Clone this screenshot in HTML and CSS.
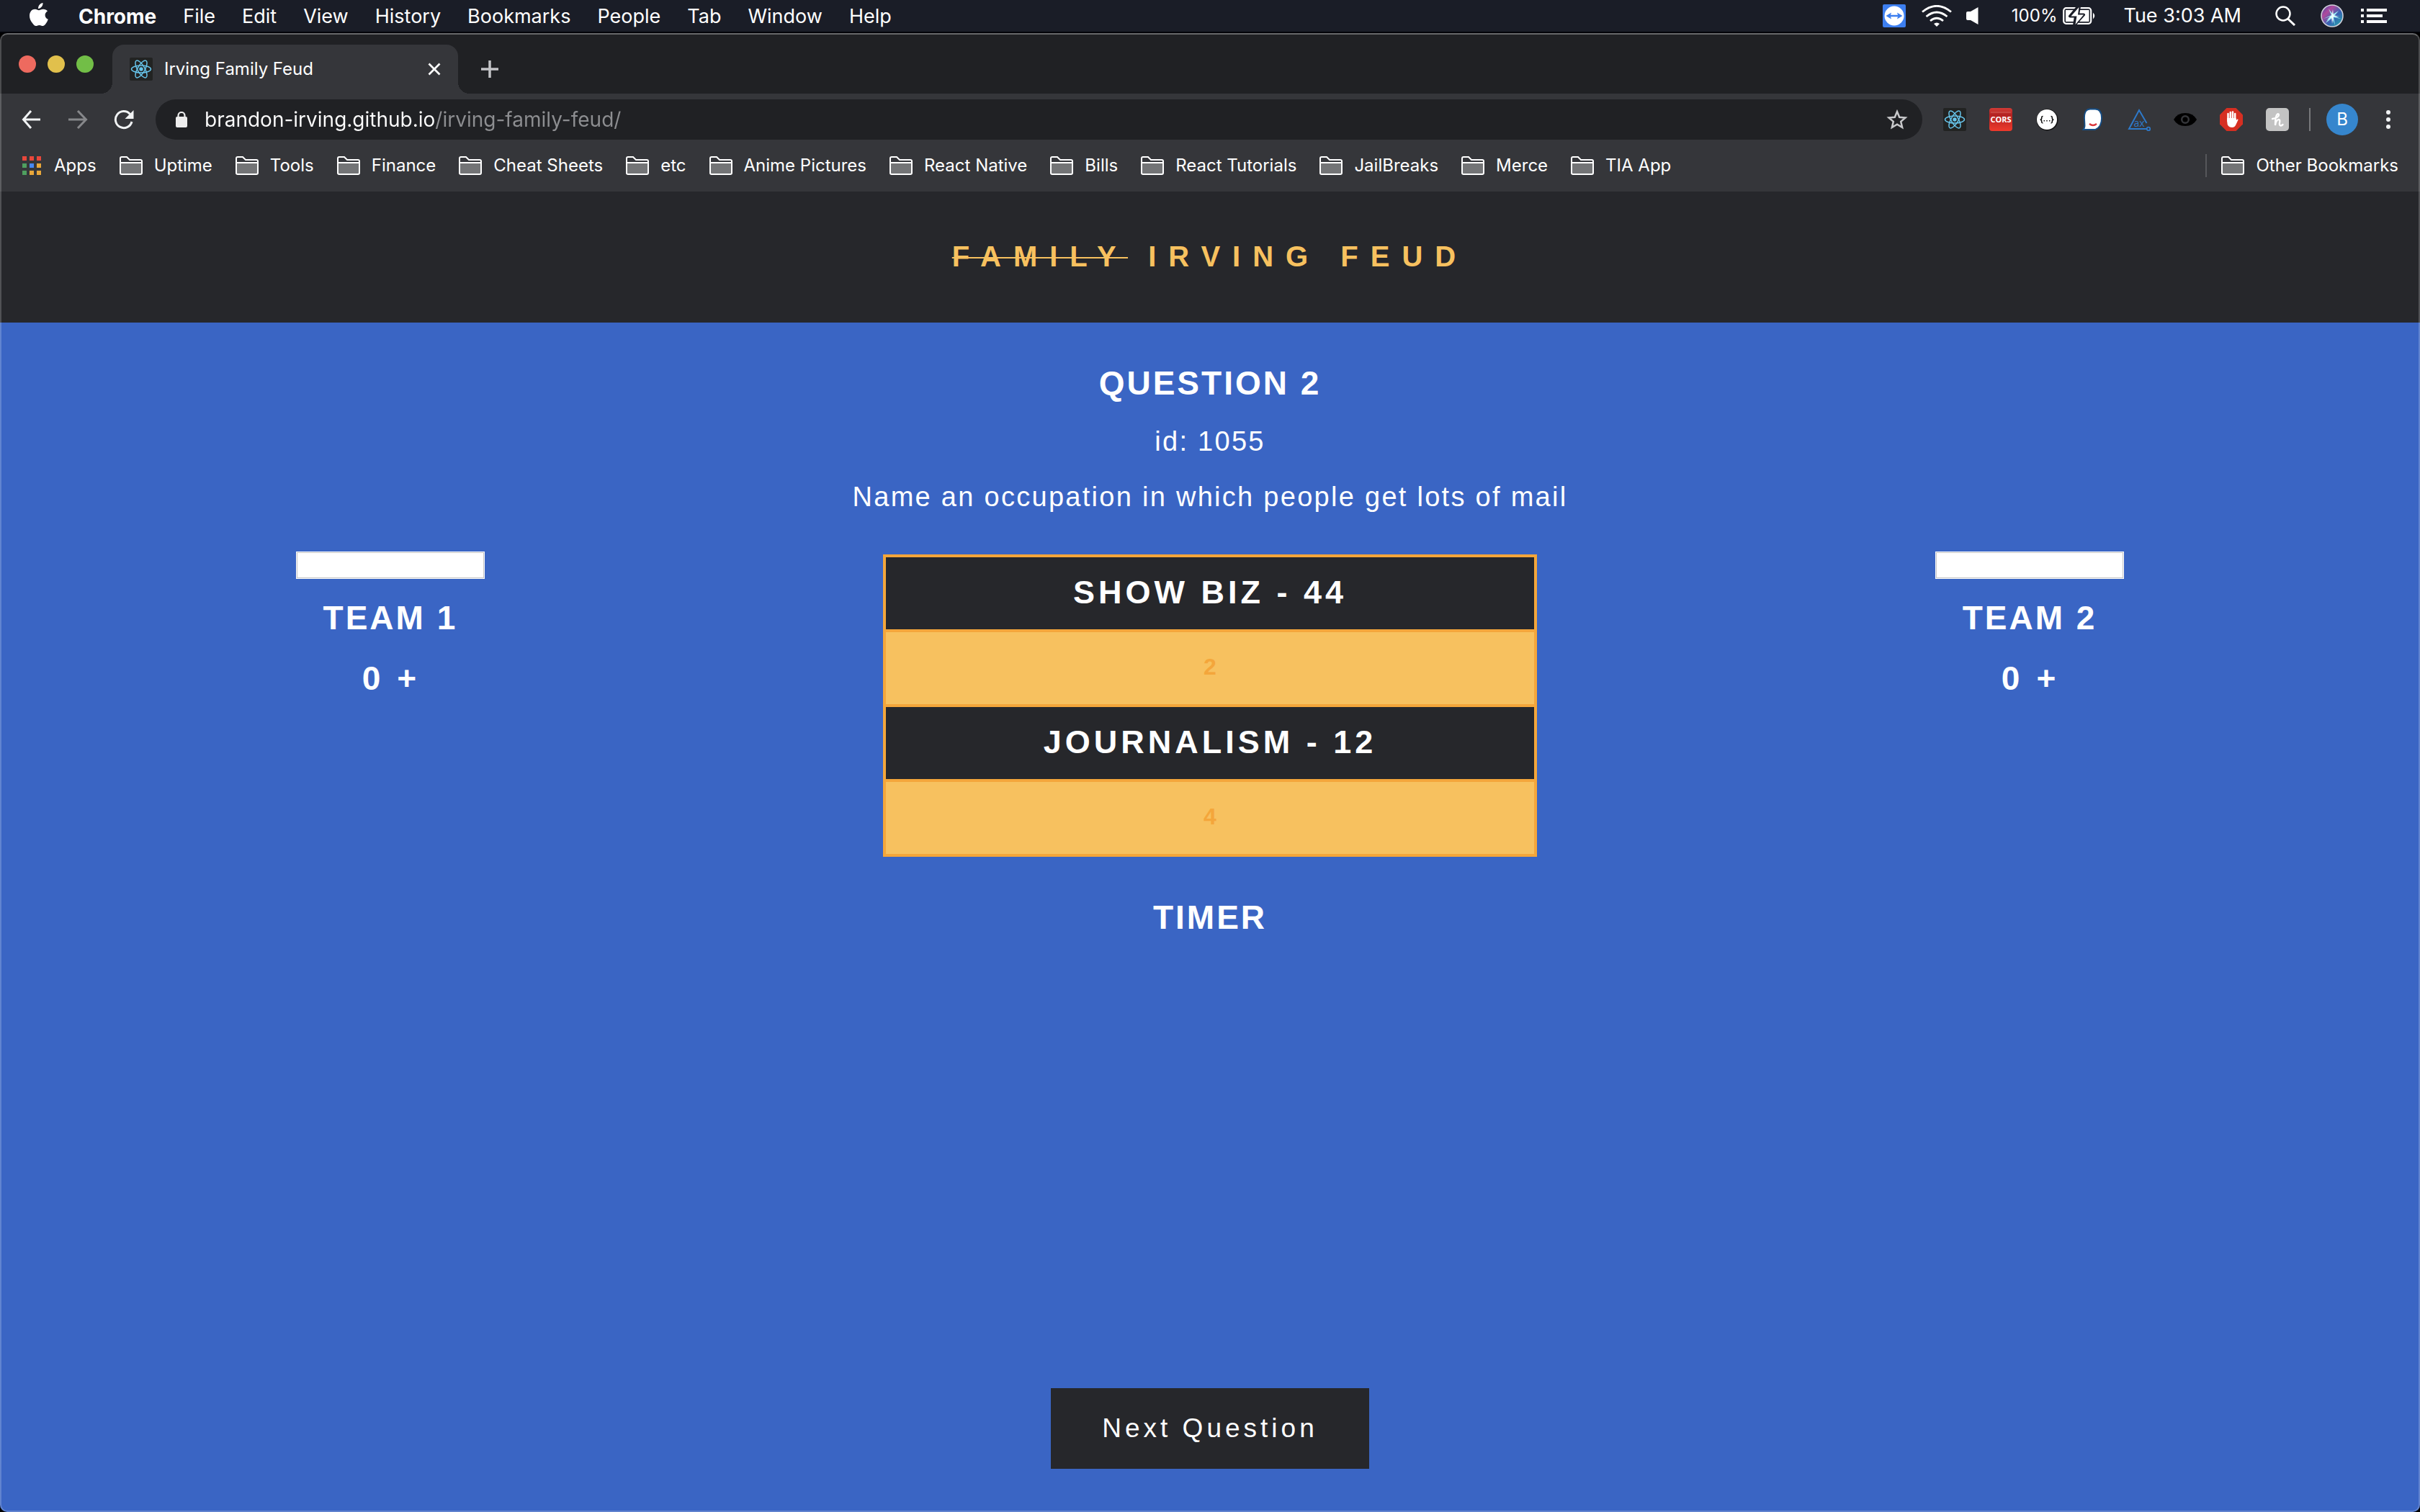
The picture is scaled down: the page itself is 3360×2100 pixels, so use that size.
FILE: index.html
```html
<!DOCTYPE html>
<html lang="en">
<head>
<meta charset="utf-8">
<title>Irving Family Feud</title>
<link rel="stylesheet" href="styles.css">
</head>
<body>
<svg class="defs" width="0" height="0" aria-hidden="true">
  <symbol id="folder" viewBox="0 0 32 26">
    <path d="M2 9h28v15H2z" fill="#737476"/>
    <path d="M1 24V3q0-2 2-2h7l4 4h15q2 0 2 2v16q0 2-2 2H3q-2 0-2-2zM1 9h30" fill="none" stroke="#fff" stroke-width="2"/>
  </symbol>
  <symbol id="react" viewBox="0 0 32 32">
    <rect width="32" height="32" rx="2" fill="#222322"/>
    <g fill="none" stroke="#67c4ea" stroke-width="1.500">
      <ellipse cx="16" cy="16" rx="13.500" ry="5"/>
      <ellipse cx="16" cy="16" rx="13.500" ry="5" transform="rotate(60 16 16)"/>
      <ellipse cx="16" cy="16" rx="13.500" ry="5" transform="rotate(120 16 16)"/>
    </g>
    <circle cx="16" cy="16" r="2.700" fill="#67c4ea"/>
  </symbol>
</svg>

<div class="menubar">
  <nav class="menus" aria-label="Menu bar">
    <svg class="apple" width="28" height="34" viewBox="0 0 28 34"><path fill="#fff" d="M19.500 1c.3 2.200-.6 4.200-1.800 5.600-1.300 1.500-3 2.400-4.600 2.300-.3-2.200.7-4.200 1.900-5.500C16.200 2 18 1.200 19.500 1zM26 12.400c-2.200 1.300-3.400 3.200-3.400 5.500 0 2.700 1.600 4.900 4.200 5.900-.7 2.200-1.800 4.200-3.100 6-1.200 1.700-2.500 3.200-4.400 3.200-1.900 0-2.500-1.100-4.700-1.100s-2.900 1.100-4.700 1.100c-1.900 0-3.300-1.700-4.600-3.600C2.600 26.500 1 22.800 1 19c0-6 3.800-9.200 7.500-9.200 2.200 0 4.100 1.400 5.500 1.400 1.300 0 3.400-1.500 6-1.500 2.500 0 4.700 1 6 2.700z"/></svg>
    <a class="menu menu-app" href="#">Chrome</a>
    <a class="menu" href="#">File</a>
    <a class="menu" href="#">Edit</a>
    <a class="menu" href="#">View</a>
    <a class="menu" href="#">History</a>
    <a class="menu" href="#">Bookmarks</a>
    <a class="menu" href="#">People</a>
    <a class="menu" href="#">Tab</a>
    <a class="menu" href="#">Window</a>
    <a class="menu" href="#">Help</a>
  </nav>
  <div class="status">
    <svg class="st-viewer" width="32" height="32" viewBox="0 0 32 32"><rect width="32" height="32" rx="2" fill="#3d7ff0"/><circle cx="16" cy="16" r="13.500" fill="#fff"/><path d="M4.500 16l7.500-4.500-1 3.200h10l-1-3.200 7.500 4.500-7.500 4.500 1-3.200H11l1 3.200z" fill="#3d7ff0"/></svg>
    <svg class="st-wifi" width="42" height="30" viewBox="0 0 42 30"><g fill="none" stroke="#fff" stroke-width="2.700"><path d="M1 9.500Q21-7 41 9.500"/><path d="M6.500 16Q21 4 35.500 16"/><path d="M12 22Q21 14.500 30 22"/></g><path d="M17 26q4-3 8 0l-4 4z" fill="#fff"/></svg>
    <svg class="st-sound" width="17" height="24" viewBox="0 0 17 24"><path d="M2 6h4l10.500-6v24L6 18H2q-2 0-2-2V8q0-2 2-2z" fill="#fff"/></svg>
    <span class="percent">100%</span>
    <svg class="st-battery" width="46" height="26" viewBox="0 0 46 26"><rect x="1.200" y="2.200" width="38" height="21.600" rx="3.500" fill="none" stroke="#fff" stroke-width="2.200"/><rect x="4" y="5" width="32.500" height="16" fill="#fff"/><path d="M21.500 0L10 13.500h8L16 26l13-14.500h-8L23 0z" fill="#fff" stroke="#1a1d27" stroke-width="4" stroke-linejoin="round"/><path d="M22.500 1L11.500 13.500h8L17.500 25 29 11.500h-8z" fill="#fff"/><path d="M42 8.500q4.500 4.500 0 9z" fill="#fff"/></svg>
    <span class="clock">Tue 3:03 AM</span>
    <svg class="st-search" width="30" height="28" viewBox="0 0 30 28"><circle cx="12" cy="11" r="9.500" fill="none" stroke="#fff" stroke-width="2.500"/><path d="M18.500 18L28 27" stroke="#fff" stroke-width="3"/></svg>
    <svg class="st-siri" width="32" height="32" viewBox="0 0 32 32"><defs><linearGradient id="siri" x1="0" y1="0" x2="1" y2="1"><stop offset="0" stop-color="#3a48a8"/><stop offset=".3" stop-color="#b04a9c"/><stop offset=".6" stop-color="#3563b4"/><stop offset="1" stop-color="#24b5a5"/></linearGradient></defs><circle cx="16" cy="16" r="15" fill="url(#siri)" stroke="#d2d2dc" stroke-width="1.500"/><path d="M4 20l11-5L11 6l6 8 8-5-6 7 9 4-10-2 2 11-4-10-9 7 6-9z" fill="#9ff1f5"/><path d="M8 22l7-6 2-9 1 8 8 2-8 0-2 10-1-9z" fill="#fff" opacity=".8"/></svg>
    <svg class="st-list" width="36" height="20" viewBox="0 0 36 20"><path d="M0 0h4v4H0zM8 0h28v4H8zM0 8h4v4H0zM8 8h22v4H8zM0 16h4v4H0zM8 16h28v4H8z" fill="#fff"/></svg>
  </div>
</div>

<div class="window">
  <div class="tabstrip">
    <div class="lights"><span class="light red"></span><span class="light yellow"></span><span class="light green"></span></div>
    <div class="tab">
      <svg width="32" height="32"><use href="#react"/></svg>
      <span class="tab-title">Irving Family Feud</span>
      <button class="icon-btn" aria-label="Close tab"><svg width="18" height="18" viewBox="0 0 18 18"><path d="M1.500 1.500l15 15M16.500 1.500l-15 15" stroke="#fff" stroke-width="2.700"/></svg></button>
    </div>
    <button class="icon-btn new-tab" aria-label="New tab"><svg width="24" height="24" viewBox="0 0 24 24"><path d="M12 0v24M0 12h24" stroke="#c3c4c7" stroke-width="3.500"/></svg></button>
  </div>

  <div class="toolbar">
    <div class="nav-buttons">
      <button class="icon-btn" aria-label="Back"><svg width="28" height="26" viewBox="0 0 28 26"><path d="M13 1L2.500 13 13 25M2.500 13H26" fill="none" stroke="#f1f3f4" stroke-width="3"/></svg></button>
      <button class="icon-btn" aria-label="Forward"><svg width="28" height="26" viewBox="0 0 28 26"><path d="M14 1l11.500 12L14 25M25.500 13H1" fill="none" stroke="#86878a" stroke-width="3"/></svg></button>
      <button class="icon-btn" aria-label="Reload"><svg width="28" height="28" viewBox="0 0 28 28"><path d="M25 17A11.500 11.500 0 1 1 22.500 6.500" fill="none" stroke="#f1f3f4" stroke-width="3"/><path d="M27.500 1v12h-12z" fill="#f1f3f4"/></svg></button>
    </div>
    <div class="omnibox">
      <svg width="16" height="22" viewBox="0 0 16 22"><rect y="7" width="16" height="15" rx="2" fill="#eee"/><path d="M3.500 8V5.500a4.500 4.500 0 0 1 9 0V8" fill="none" stroke="#eee" stroke-width="2.200"/></svg>
      <input class="url" type="text" aria-label="Address" value="brandon-irving.github.io/irving-family-feud/">
      <button class="icon-btn" aria-label="Bookmark this page"><svg width="30" height="30" viewBox="0 0 30 30"><path d="M15 4l3.200 7.700 8.300.7-6.300 5.500 1.900 8.100L15 21.700 7.900 26l1.900-8.100-6.300-5.500 8.300-.7z" fill="none" stroke="#c8c9cb" stroke-width="2.500"/></svg></button>
    </div>
    <div class="extensions">
      <svg width="32" height="32"><use href="#react"/></svg>
      <svg width="32" height="32" viewBox="0 0 32 32"><defs><linearGradient id="cors" x1="0" y1="0" x2="0" y2="1"><stop offset="0" stop-color="#d23c36"/><stop offset=".3" stop-color="#b32222"/><stop offset="1" stop-color="#ee3a2c"/></linearGradient></defs><rect width="32" height="32" rx="4" fill="url(#cors)"/><path d="M2 6h28" stroke="#d0605a"/><text x="16" y="20" text-anchor="middle" class="cors">CORS</text></svg>
      <svg width="32" height="32" viewBox="0 0 32 32"><circle cx="16.500" cy="16.500" r="15" fill="#111"/><circle cx="16" cy="16" r="14" fill="#fff"/><path d="M10.500 11.500q-2 0-1.800 2.200t-2 2.500q2.200.3 2 2.500t1.800 2.200M21.500 11.500q2 0 1.800 2.200t2 2.500q-2.200.3-2 2.500t-1.800 2.200" fill="none" stroke="#111" stroke-width="1.500"/><path d="M11.500 17h1.500v1.500h-1.500zM15.200 17h1.500v1.500h-1.500zM19 17h1.500v1.500H19z" fill="#111"/></svg>
      <svg width="32" height="32" viewBox="0 0 32 32"><path d="M4 14Q4 1.500 12 1.500h7Q28 1.500 28 14t-9 16H2.500Q5 27 4.500 23z" fill="#fff" stroke="#164f87" stroke-width="1.800"/><path d="M11 22q5 4 10 0" fill="none" stroke="#d9363b" stroke-width="2.300"/></svg>
      <svg width="32" height="32" viewBox="0 0 32 32"><path d="M26 29H2L16 3l10.500 18" fill="none" stroke="#2e79c9" stroke-width="2"/><circle cx="29" cy="29" r="2.300" fill="none" stroke="#2e79c9" stroke-width="1.700"/><text x="16" y="26" text-anchor="middle" class="ax">ax</text></svg>
      <svg width="32" height="32" viewBox="0 0 32 32"><path d="M0 16Q5 7 16 7t16 9q-5 9-16 9T0 16z" fill="#000"/><circle cx="16" cy="16" r="4.800" fill="none" stroke="#35363a" stroke-width="2.500"/></svg>
      <svg width="32" height="32" viewBox="0 0 32 32"><path d="M9.500 0h13L32 9.500v13L22.500 32h-13L0 22.500v-13z" fill="#d62f22"/><g stroke="#fff" stroke-width="2.500" stroke-linecap="round"><path d="M11.500 8v10M14.800 6V18M18 5.500V18M21.200 8V20"/></g><path d="M10.200 14h12.200l1 3 .8-1.500q1.500-.5 1.300 1L22 24q-1.500 3-5 3-6.700 0-6.800-8z" fill="#fff"/></svg>
      <svg width="32" height="32" viewBox="0 0 32 32"><rect width="32" height="32" rx="5" fill="#c3c3c3"/><path d="M9 15q8-1 9-5 0-2.500-2-1.500-3 2-3 15.500 1-7 4.500-8 2.500 0 1.700 3.500-1 5 1.300 5 2 0 3-1.500" fill="none" stroke="#fff" stroke-width="2.300" stroke-linecap="round"/></svg>
    </div>
    <span class="divider"></span>
    <button class="avatar" aria-label="Profile">B</button>
    <button class="icon-btn" aria-label="More"><svg width="6" height="26" viewBox="0 0 6 26"><circle cx="3" cy="3" r="3" fill="#f1f3f4"/><circle cx="3" cy="13" r="3" fill="#f1f3f4"/><circle cx="3" cy="23" r="3" fill="#f1f3f4"/></svg></button>
  </div>

  <nav class="bookmarks" aria-label="Bookmarks">
    <a class="bookmark apps" href="#"><svg width="26" height="27" viewBox="0 0 26 27"><path d="M0 0h6v6H0zM10 0h6v6h-6zM20 0h6v6h-6z" fill="#e8473b"/><path d="M0 10h6v6H0zM0 20h6v6H0z" fill="#4f9f5f"/><path d="M10 10h6v6h-6z" fill="#4587f4"/><path d="M20 10h6v6h-6zM10 20h6v6h-6zM20 20h6v6h-6z" fill="#e8a73a"/></svg>Apps</a>
    <a class="bookmark" href="#"><svg width="32" height="26"><use href="#folder"/></svg>Uptime</a>
    <a class="bookmark" href="#"><svg width="32" height="26"><use href="#folder"/></svg>Tools</a>
    <a class="bookmark" href="#"><svg width="32" height="26"><use href="#folder"/></svg>Finance</a>
    <a class="bookmark" href="#"><svg width="32" height="26"><use href="#folder"/></svg>Cheat Sheets</a>
    <a class="bookmark" href="#"><svg width="32" height="26"><use href="#folder"/></svg>etc</a>
    <a class="bookmark" href="#"><svg width="32" height="26"><use href="#folder"/></svg>Anime Pictures</a>
    <a class="bookmark" href="#"><svg width="32" height="26"><use href="#folder"/></svg>React Native</a>
    <a class="bookmark" href="#"><svg width="32" height="26"><use href="#folder"/></svg>Bills</a>
    <a class="bookmark" href="#"><svg width="32" height="26"><use href="#folder"/></svg>React Tutorials</a>
    <a class="bookmark" href="#"><svg width="32" height="26"><use href="#folder"/></svg>JailBreaks</a>
    <a class="bookmark" href="#"><svg width="32" height="26"><use href="#folder"/></svg>Merce</a>
    <a class="bookmark" href="#"><svg width="32" height="26"><use href="#folder"/></svg>TIA App</a>
    <a class="bookmark other" href="#"><svg width="32" height="26"><use href="#folder"/></svg>Other Bookmarks</a>
  </nav>

  <header class="banner"><h1 class="title"><s>FAMILY</s> IRVING FEUD</h1></header>

  <main class="game">
    <section class="question">
      <h2 class="heading">QUESTION 2</h2>
      <p class="detail">id: 1055</p>
      <p class="detail">Name an occupation in which people get lots of mail</p>
    </section>

    <section class="round">
      <div class="team">
        <input class="team-name" type="text" aria-labelledby="team1">
        <h2 class="heading" id="team1">TEAM 1</h2>
        <div class="score heading"><span>0</span><button class="plus" aria-label="Add points to team 1">+</button></div>
      </div>
      <div class="center">
        <div class="board">
          <button class="answer shown">SHOW BIZ - 44</button>
          <button class="answer">2</button>
          <button class="answer shown">JOURNALISM - 12</button>
          <button class="answer">4</button>
        </div>
        <h2 class="heading">TIMER</h2>
      </div>
      <div class="team">
        <input class="team-name" type="text" aria-labelledby="team2">
        <h2 class="heading" id="team2">TEAM 2</h2>
        <div class="score heading"><span>0</span><button class="plus" aria-label="Add points to team 2">+</button></div>
      </div>
    </section>

    <button class="next">Next Question</button>
  </main>
</div>
</body>
</html>
```

FILE: styles.css
```css
* {
  box-sizing: border-box;
}

body {
  margin: 0;
  min-height: 100vh;
  display: flex;
  flex-direction: column;
  background: #000;
  color: #fff;
  font-family: Inter, "Liberation Sans", sans-serif;
}

h1, h2, p {
  margin: 0;
}

a {
  color: inherit;
  text-decoration: none;
}

button {
  padding: 0;
  border: 0;
  background: none;
  color: inherit;
  font: inherit;
}

svg {
  display: block;
  flex: none;
}

.defs {
  position: absolute;
}

/* System menu bar */
.menubar {
  display: flex;
  justify-content: space-between;
  align-items: center;
  height: 46px;
  padding: 0 46px 0 40px;
  border-bottom: 2px solid #020308;
  background: #1a1d27;
  font-size: 27px;
  line-height: 44px;
  white-space: nowrap;
}

.menus {
  display: flex;
  align-items: center;
  gap: 37px;
  padding-top: 2px;
}

.apple {
  margin: 0 4px 6px 0;
}

.menu-app {
  font-size: 28px;
  font-weight: 700;
}

.status {
  display: flex;
  align-items: center;
}

.st-viewer { margin-right: 22px; }
.st-wifi { margin-right: 20px; }
.st-sound { margin-right: 46px; }
.percent { margin-right: 8px; font-size: 24px; }
.st-battery { margin-right: 38px; }
.clock { margin-right: 46px; }
.st-search { margin-right: 34px; }
.st-siri { margin-right: 24px; }

/* Browser window */
.window {
  position: relative;
  flex: 1;
  display: flex;
  flex-direction: column;
  overflow: hidden;
  border-radius: 10px;
  background: #35363a;
}

.window::after {
  content: "";
  position: absolute;
  inset: 0;
  border: 2px solid rgba(255, 255, 255, .2);
  border-top-color: rgba(255, 255, 255, .32);
  border-radius: 10px;
  pointer-events: none;
}

.tabstrip {
  display: flex;
  align-items: center;
  height: 84px;
  padding: 16px 26px 0;
  background: #202124;
}

.lights {
  display: flex;
  gap: 16px;
  width: 130px;
  margin-bottom: 14px;
}

.light {
  width: 24px;
  height: 24px;
  border-radius: 50%;
}

.red { background: #ee6a5f; }
.yellow { background: #e1c04c; }
.green { background: #72be47; }

.tab {
  position: relative;
  display: flex;
  align-items: center;
  width: 480px;
  height: 68px;
  padding: 0 24px;
  border-radius: 16px 16px 0 0;
  background: #35363a;
}

.tab::before,
.tab::after {
  content: "";
  position: absolute;
  bottom: 0;
  width: 16px;
  height: 16px;
}

.tab::before {
  right: 100%;
  background: radial-gradient(circle at 0 0, #202124 16px, #35363a 16px);
}

.tab::after {
  left: 100%;
  background: radial-gradient(circle at 100% 0, #202124 16px, #35363a 16px);
}

.tab-title {
  flex: 1;
  margin-left: 16px;
  font-size: 24px;
  line-height: 32px;
}

.new-tab {
  margin-left: 32px;
}

.toolbar {
  display: flex;
  align-items: center;
  height: 72px;
  padding: 0 41px 0 30px;
}

.nav-buttons {
  display: flex;
  gap: 36px;
}

.omnibox {
  flex: 1;
  display: flex;
  align-items: center;
  height: 56px;
  margin: 0 29px 0 30px;
  padding: 0 20px 0 28px;
  border-radius: 28px;
  background: #202124;
}

.url {
  flex: 1;
  min-width: 0;
  margin-left: 24px;
  padding: 0;
  border: 0;
  outline: 0;
  background: linear-gradient(90deg, #fff 320px, #8d8e91 320px);
  background-clip: text;
  color: #fff;
  -webkit-text-fill-color: transparent;
  font: 28px/40px Inter, "Liberation Sans", sans-serif;
}

.extensions {
  display: flex;
  gap: 32px;
}

.cors {
  fill: #fff;
  font: 700 11px "Open Sans", sans-serif;
}

.ax {
  fill: #2e79c9;
  font: 14px "Open Sans", sans-serif;
}

.divider {
  width: 2px;
  height: 32px;
  margin: 0 22px 0 28px;
  background: #77787b;
}

.avatar {
  width: 44px;
  height: 44px;
  margin-right: 39px;
  border-radius: 50%;
  background: #3686cd;
  font-size: 24px;
  line-height: 44px;
  text-align: center;
}

.bookmarks {
  display: flex;
  align-items: center;
  gap: 32px;
  height: 64px;
  padding: 0 30px 8px 31px;
  font-size: 24px;
  line-height: 32px;
  white-space: nowrap;
}

.bookmark {
  display: flex;
  align-items: center;
  gap: 16px;
}

.apps {
  gap: 18px;
}

.other {
  margin-left: auto;
  padding-left: 20px;
  border-left: 2px solid #56575a;
}

/* Game */
.banner {
  padding: 66px 0 68px;
  background: #26272b;
  color: #f7c15f;
  font-family: "Liberation Sans", sans-serif;
  text-align: center;
}

.title {
  font-size: 40px;
  line-height: 48px;
  letter-spacing: 17px;
}

.title s {
  text-decoration-thickness: 2px;
}

.game {
  flex: 1;
  display: flex;
  flex-direction: column;
  align-items: center;
  padding: 56px 0 60px;
  background: #3a65c4;
  font-family: "Liberation Sans", sans-serif;
  text-align: center;
}

.question {
  display: flex;
  flex-direction: column;
  gap: 29px;
}

.heading {
  font-size: 46px;
  font-weight: 700;
  line-height: 56px;
  letter-spacing: 3px;
}

.detail {
  font-size: 38px;
  line-height: 48px;
  letter-spacing: .06em;
}

.round {
  display: grid;
  grid-template-columns: 10fr 11fr 10fr;
  align-self: stretch;
  margin-top: 52px;
}

.team {
  display: flex;
  flex-direction: column;
  align-items: center;
}

.team-name {
  width: 262px;
  height: 38px;
  margin-bottom: 26px;
  padding: 0 6px;
  border: 1px solid #fff;
  outline: 1px solid #c4c4c4;
  outline-offset: -2px;
  background: #fff;
  color: #000;
  font: 24px "Liberation Sans", sans-serif;
}

.score {
  display: flex;
  gap: 20px;
  margin-top: 28px;
}

.plus {
  letter-spacing: inherit;
}

.center {
  display: flex;
  flex-direction: column;
  align-items: center;
  gap: 56px;
  padding-top: 4px;
}

.board {
  display: flex;
  flex-direction: column;
  gap: 4px;
  width: 908px;
  padding: 4px;
  background: #f4a63b;
}

.answer {
  height: 100px;
  padding-bottom: 4px;
  background: #f7c15f;
  color: #f4a63b;
  font-size: 32px;
  font-weight: 700;
}

.shown {
  padding-bottom: 2px;
  background: #26272b;
  color: #fff;
  font-size: 45px;
  letter-spacing: 5px;
}

.next {
  height: 112px;
  margin-top: auto;
  padding: 0 71px;
  background: #26272b;
  font-size: 37px;
  letter-spacing: 5px;
}
```
